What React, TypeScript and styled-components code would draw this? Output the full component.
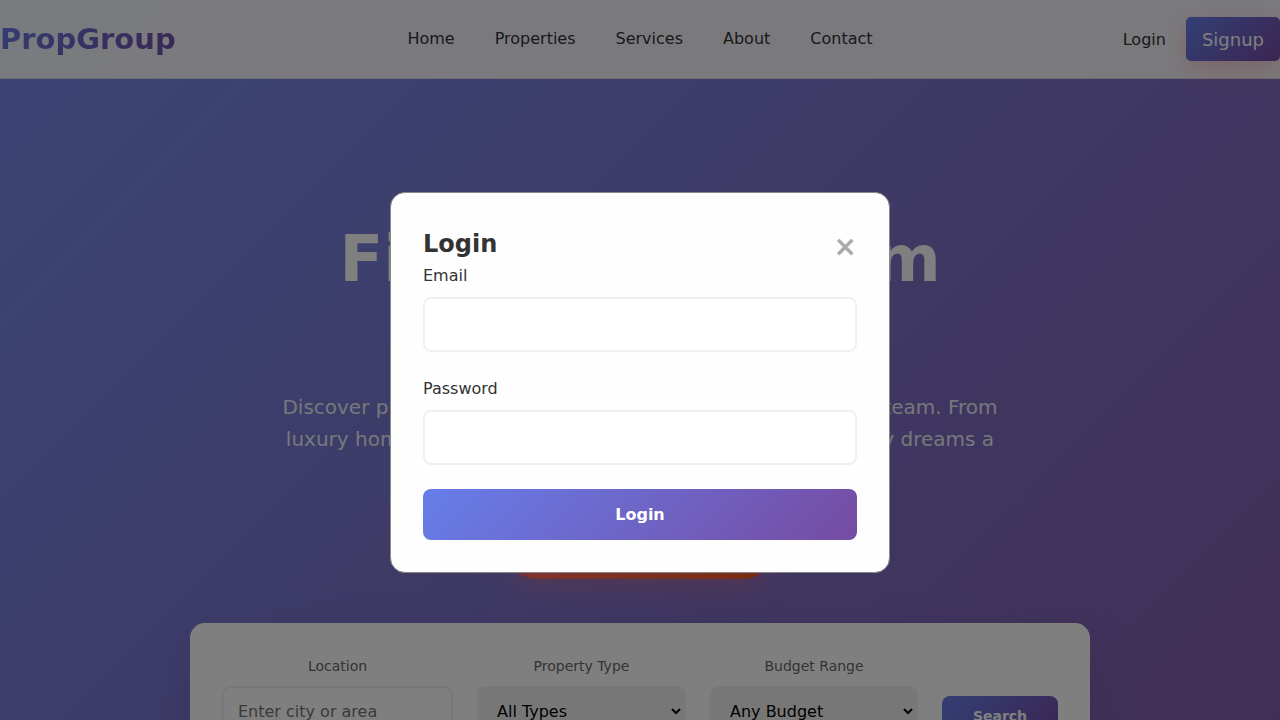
import React from 'react';
import styled, { createGlobalStyle } from 'styled-components';

const brand = 'linear-gradient(135deg, #667eea 0%, #764ba2 100%)';
const glow = '0 8px 25px rgba(255, 107, 107, 0.3)';

const GlobalStyle = createGlobalStyle`
  * { box-sizing: border-box; }
  html { height: 100%; overflow: hidden; }
  body {
    margin: 0;
    height: 100%;
    overflow: hidden;
    font-family: 'DejaVu Sans', sans-serif;
    font-size: 16px;
    line-height: 1.6;
    color: #333;
  }
  button, input, select { font-family: inherit; }
`;

const Hero = styled.div`
  display: flex;
  flex-direction: column;
  min-height: 100vh;
  padding-bottom: 32px;
  background: linear-gradient(rgba(255, 255, 255, 0.1), rgba(255, 255, 255, 0.1)), ${brand};
`;

const Header = styled.header`
  display: grid;
  grid-template-columns: 1fr auto 1fr;
  align-items: center;
  height: 79px;
  background: rgba(255, 255, 255, 0.92);
  border-bottom: 1px solid rgba(0, 0, 0, 0.1);
`;

const Logo = styled.a`
  justify-self: start;
  font-size: 29px;
  font-weight: 700;
  text-decoration: none;
  background: ${brand};
  background-clip: text;
  -webkit-background-clip: text;
  color: transparent;
`;

const Nav = styled.nav`
  display: flex;
  gap: 40px;
`;

const NavLink = styled.a`
  color: #333;
  text-decoration: none;
`;

const Account = styled.div`
  display: flex;
  justify-content: flex-end;
  align-items: center;
  gap: 20px;
`;

const LoginLink = styled.button`
  padding: 0;
  border: 0;
  background: none;
  color: #333;
  font-size: 16px;
`;

const SignupButton = styled.button`
  height: 44px;
  padding: 0 16px;
  border: 0;
  border-radius: 5px;
  background: ${brand};
  box-shadow: ${glow};
  color: #fff;
  font-size: 18px;
`;

const HeroBody = styled.main`
  display: flex;
  flex-direction: column;
  align-items: center;
  padding-top: 142px;
  text-align: center;
`;

const Title = styled.h1`
  max-width: 800px;
  margin: 0 0 16px;
  color: #fff;
  font-size: 64px;
  font-weight: 800;
  line-height: 77px;
`;

const Lead = styled.p`
  margin: 0 0 32px;
  color: rgba(255, 255, 255, 0.9);
  font-size: 20px;
  line-height: 32px;
`;

const CallToAction = styled.a`
  padding: 16px 44px;
  border-radius: 50px;
  background: linear-gradient(135deg, #ff6b6b, #ee5a24);
  box-shadow: ${glow};
  color: #fff;
  font-size: 17px;
  font-weight: 600;
  line-height: 28px;
  text-decoration: none;
`;

const SearchCard = styled.form`
  display: grid;
  grid-template-columns: 231fr 209fr 208fr 116fr;
  gap: 24px;
  align-items: end;
  width: calc(100% - 40px);
  max-width: 900px;
  margin-top: 44px;
  padding: 32px;
  border-radius: 15px;
  background: #fff;
  box-shadow: 0 20px 60px rgba(0, 0, 0, 0.1);
`;

const SearchField = styled.div`
  display: flex;
  flex-direction: column;
  gap: 8px;
`;

const SearchLabel = styled.label`
  color: #666;
  font-size: 14px;
  line-height: 23px;
`;

const SearchInput = styled.input`
  width: 100%;
  height: 50px;
  padding: 0 14px;
  border: 2px solid #f0f0f0;
  border-radius: 8px;
  background: #fff;
  font-size: 16px;
`;

const SearchSelect = styled.select`
  width: 100%;
  height: 50px;
  padding: 0 14px;
  border: 2px solid #f0f0f0;
  border-radius: 8px;
  background-color: #efefef;
  color: #000;
  font-size: 16px;
`;

const SearchButton = styled.button`
  height: 40px;
  border: 0;
  border-radius: 8px;
  background: ${brand};
  color: #fff;
  font-size: 14px;
  font-weight: 600;
`;

const Backdrop = styled.div`
  position: fixed;
  inset: 0;
  display: flex;
  align-items: center;
  justify-content: center;
  padding-top: 45px;
  background: rgba(0, 0, 0, 0.5);
`;

const Dialog = styled.section`
  width: 500px;
  max-width: 90%;
  padding: 32px;
  border: 1px solid #888;
  border-radius: 15px;
  background: #fefefe;
`;

const DialogHeader = styled.div`
  display: flex;
  align-items: center;
  justify-content: space-between;
  height: 38px;
`;

const DialogTitle = styled.h2`
  margin: 0;
  color: #333;
  font-size: 24px;
  line-height: 38px;
`;

const CloseButton = styled.button`
  padding: 6px 0 0;
  border: 0;
  background: none;
  color: #aaa;
  font-size: 28px;
  font-weight: 700;
  line-height: 32px;
`;

const FormField = styled.div`
  display: flex;
  flex-direction: column;
  gap: 8px;
  margin-bottom: 24px;
`;

const FormLabel = styled.label`
  line-height: 26px;
`;

const FormInput = styled.input`
  height: 55px;
  padding: 0 16px;
  border: 2px solid #f0f0f0;
  border-radius: 8px;
  background: #fff;
  font-size: 16px;
`;

const SubmitButton = styled.button`
  width: 100%;
  height: 51px;
  border: 0;
  border-radius: 8px;
  background: ${brand};
  color: #fff;
  font-size: 16px;
  font-weight: 600;
`;

const links = ['Home', 'Properties', 'Services', 'About', 'Contact'];

export default function App() {
  return (
    <>
      <GlobalStyle />
      <Hero>
        <Header>
          <Logo href="#">PropGroup</Logo>
          <Nav>
            {links.map((link) => (
              <NavLink key={link} href={`#${link.toLowerCase()}`}>{link}</NavLink>
            ))}
          </Nav>
          <Account>
            <LoginLink type="button">Login</LoginLink>
            <SignupButton type="button">Signup</SignupButton>
          </Account>
        </Header>
        <HeroBody>
          <Title>Find Your Dream<br />Property</Title>
          <Lead>
            Discover premium properties with our experienced, trusted team. From<br />
            luxury homes to strong investments, we make your property dreams a<br />
            reality.
          </Lead>
          <CallToAction href="#properties">Explore Properties</CallToAction>
          <SearchCard>
            <SearchField>
              <SearchLabel htmlFor="location">Location</SearchLabel>
              <SearchInput id="location" placeholder="Enter city or area" />
            </SearchField>
            <SearchField>
              <SearchLabel htmlFor="type">Property Type</SearchLabel>
              <SearchSelect id="type"><option>All Types</option></SearchSelect>
            </SearchField>
            <SearchField>
              <SearchLabel htmlFor="budget">Budget Range</SearchLabel>
              <SearchSelect id="budget"><option>Any Budget</option></SearchSelect>
            </SearchField>
            <SearchButton type="button">Search</SearchButton>
          </SearchCard>
        </HeroBody>
      </Hero>
      <Backdrop>
        <Dialog role="dialog" aria-modal="true" aria-labelledby="dialog-title">
          <DialogHeader>
            <DialogTitle id="dialog-title">Login</DialogTitle>
            <CloseButton type="button" aria-label="Close">×</CloseButton>
          </DialogHeader>
          <form>
            <FormField>
              <FormLabel htmlFor="email">Email</FormLabel>
              <FormInput id="email" type="email" />
            </FormField>
            <FormField>
              <FormLabel htmlFor="password">Password</FormLabel>
              <FormInput id="password" type="password" />
            </FormField>
            <SubmitButton type="button">Login</SubmitButton>
          </form>
        </Dialog>
      </Backdrop>
    </>
  );
}
